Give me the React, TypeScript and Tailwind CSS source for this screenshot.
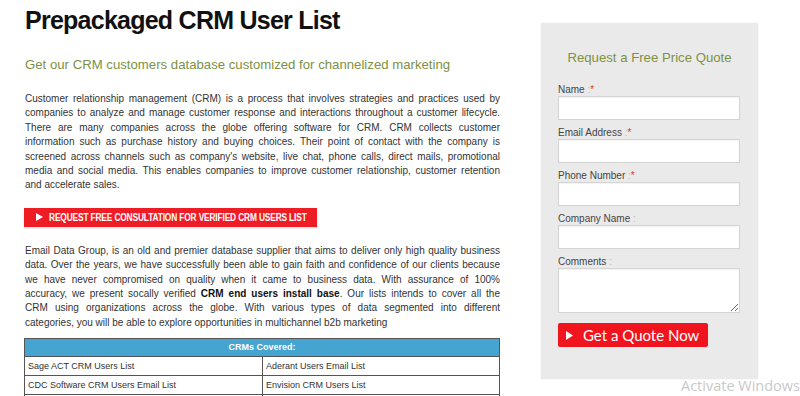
import React from 'react';

const body = { fontFamily: '"Liberation Sans", Arial, sans-serif' };

// each line is justified on its own so the breaks follow the original
function Justified({ lines, className }: { lines: React.ReactNode[]; className?: string }) {
    return (
        <p className={className}>
            {lines.map((l, i) => (
                <span
                    key={i}
                    className={i < lines.length - 1 ? 'block text-justify [text-align-last:justify]' : 'block'}
                >
                    {l}
                </span>
            ))}
        </p>
    );
}

function Field({ label, star, tall }: { label: string; star?: boolean; tall?: boolean }) {
    return (
        <div className="flex flex-col">
            <label className="text-[10px] leading-[12px] text-[#444]">
                {label}
                <span className="text-[#bbb]"> :</span>
                {star && <span className="text-[#e33]">*</span>}
            </label>
            {tall ? (
                <textarea className="h-[45px] w-[182px] resize-y border border-[#d4d4d4] bg-white shadow-[inset_0_1px_1px_rgba(0,0,0,0.05)]" />
            ) : (
                <input className="h-[24px] w-[182px] border border-[#d4d4d4] bg-white shadow-[inset_0_1px_1px_rgba(0,0,0,0.05)]" />
            )}
        </div>
    );
}

export default function App() {
    return (
        <div className="relative h-[396px] w-[800px] overflow-hidden bg-white" style={body}>
            <div className="flex">
                {/* Main content */}
                <div className="ml-[25px] w-[475px] shrink-0">
                    <h1 className="mt-[4px] text-[25px] font-bold leading-[32px] tracking-[-0.75px] text-[#111]">
                        Prepackaged CRM User List
                    </h1>
                    <h2 className="mt-[21px] text-[13.2px] leading-[16px] text-[#7d9144]">
                        Get our CRM customers database customized for channelized marketing
                    </h2>
                    <Justified
                        className="mt-[19px] text-[10px] leading-[14.4px] text-[#333]"
                        lines={[
                            'Customer relationship management (CRM) is a process that involves strategies and practices used by',
                            'companies to analyze and manage customer response and interactions throughout a customer lifecycle.',
                            'There are many companies across the globe offering software for CRM. CRM collects customer',
                            'information such as purchase history and buying choices. Their point of contact with the company is',
                            "screened across channels such as company's website, live chat, phone calls, direct mails, promotional",
                            'media and social media. This enables companies to improve customer relationship, customer retention',
                            'and accelerate sales.',
                        ]}
                    />

                    <a
                        href="#"
                        className="-ml-[1px] mt-[15px] flex h-[19px] w-[293px] items-center overflow-hidden bg-[#ee1c25] pl-[12px] text-white shadow-[0_1px_2px_rgba(0,0,0,0.15)]"
                    >
                        <svg width="7" height="8" viewBox="0 0 7 8" className="mr-[6px] shrink-0">
                            <path d="M0 0 L7 4 L0 8 Z" fill="white" />
                        </svg>
                        <span className="origin-left scale-x-[0.76] whitespace-nowrap text-[11px] font-bold leading-none tracking-[-0.2px]">
                            REQUEST FREE CONSULTATION FOR VERIFIED CRM USERS LIST
                        </span>
                    </a>

                    <Justified
                        className="mt-[17px] text-[10px] leading-[14.4px] text-[#333]"
                        lines={[
                            'Email Data Group, is an old and premier database supplier that aims to deliver only high quality business',
                            'data. Over the years, we have successfully been able to gain faith and confidence of our clients because',
                            'we have never compromised on quality when it came to business data. With assurance of 100%',
                            <>
                                accuracy, we present socally verified <b className="text-[#111]">CRM end users install base</b>. Our lists intends to cover all the
                            </>,
                            'CRM using organizations across the globe. With various types of data segmented into different',
                            'categories, you will be able to explore opportunities in multichannel b2b marketing',
                        ]}
                    />

                    <table className="-ml-[1px] mt-[8px] w-[476px] border-collapse text-[9px] text-[#333]">
                        <thead>
                            <tr>
                                <th colSpan={2} className="h-[18px] border border-[#555] bg-[#45a4d0] text-center font-bold text-white">
                                    CRMs Covered:
                                </th>
                            </tr>
                        </thead>
                        <tbody>
                            <tr>
                                <td className="h-[19px] w-[238px] border border-[#555] pl-[3px]">Sage ACT CRM Users List</td>
                                <td className="h-[19px] border border-[#555] pl-[3px]">Aderant Users Email List</td>
                            </tr>
                            <tr>
                                <td className="h-[19px] border border-[#555] pl-[3px]">CDC Software CRM Users Email List</td>
                                <td className="h-[19px] border border-[#555] pl-[3px]">Envision CRM Users List</td>
                            </tr>
                            <tr>
                                <td className="h-[19px] border border-[#555] pl-[3px]">&nbsp;</td>
                                <td className="h-[19px] border border-[#555] pl-[3px]">&nbsp;</td>
                            </tr>
                        </tbody>
                    </table>
                </div>

                {/* Quote form */}
                <div className="ml-[41px] mt-[23px] flex h-[356px] w-[217px] shrink-0 flex-col bg-[#eaeaea] pl-[17px] shadow-[0_0_2px_rgba(0,0,0,0.08)]">
                    <h3 className="mr-[17px] pt-[27px] text-center text-[13.2px] leading-[16px] text-[#7d9144]">
                        Request a Free Price Quote
                    </h3>
                    <div className="mt-[18px] flex flex-col gap-[7px]">
                        <Field label="Name" star />
                        <Field label="Email Address" star />
                        <Field label="Phone Number" star />
                        <Field label="Company Name" />
                        <Field label="Comments" tall />
                    </div>
                    <button
                        className="mt-[10px] flex h-[24px] w-[150px] items-center rounded-[2px] bg-[#f0141e] pl-[8px] text-white"
                        style={{ fontFamily: 'Lato, "Open Sans", sans-serif' }}
                    >
                        <svg width="7" height="9" viewBox="0 0 7 9" className="mr-[10px]">
                            <path d="M0 0 L7 4.5 L0 9 Z" fill="white" />
                        </svg>
                        <span className="text-[15px] leading-none">Get a Quote Now</span>
                    </button>
                </div>
            </div>

            <div
                className="absolute bottom-[1px] right-[0px] text-[14.5px] leading-[18px] text-[#c9c9c9]"
                style={{ fontFamily: '"Open Sans", "Noto Sans", sans-serif' }}
            >
                Activate Windows
            </div>
        </div>
    );
}
